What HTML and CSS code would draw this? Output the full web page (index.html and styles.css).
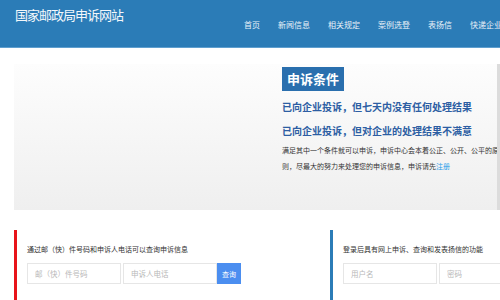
FILE: index.html
```html
<!DOCTYPE html>
<html lang="zh-CN">
<head>
    <meta charset="UTF-8">
    <title>国家邮政局申诉网站</title>
    <link rel="stylesheet" href="styles.css">
</head>
<body>
    <div class="header">
        <div class="logo">国家邮政局申诉网站</div>
        <ul class="nav">
            <li>首页</li>
            <li>新闻信息</li>
            <li>相关规定</li>
            <li>案例选登</li>
            <li>表扬信</li>
            <li>快递企业</li>
        </ul>
    </div>

    <div class="main">
        <div class="banner">
            <div class="cond-title">申诉条件</div>
            <p class="cond">已向企业投诉，但七天内没有任何处理结果</p>
            <p class="cond">已向企业投诉，但对企业的处理结果不满意</p>
            <p class="note">满足其中一个条件就可以申诉，申诉中心会本着公正、公开、公平的原<br>则，尽最大的努力来处理您的申诉信息，申诉请先<a href="#">注册</a></p>
        </div>

        <div class="panels">
            <div class="panel panel-query">
                <p class="panel-tip">通过邮（快）件号码和申诉人电话可以查询申诉信息</p>
                <div class="panel-form">
                    <input type="text" placeholder="邮（快）件号码">
                    <input type="text" placeholder="申诉人电话">
                    <button>查询</button>
                </div>
            </div>
            <div class="panel panel-login">
                <p class="panel-tip">登录后具有网上申诉、查询和发表扬信的功能</p>
                <div class="panel-form">
                    <input type="text" placeholder="用户名">
                    <input type="password" placeholder="密码">
                </div>
            </div>
        </div>
    </div>
</body>
</html>
```

FILE: styles.css
```css
body {
    margin: 0;
    padding: 0;
    background-color: #fff;
    font-family: "Noto Sans CJK SC", "Liberation Sans", sans-serif;
    overflow: hidden;
}

.header {
    display: flex;
    justify-content: space-between;
    height: 47px;
    background-color: #2b7cb7;
    border-bottom: 1px solid #5f9fcf;
}

.logo {
    color: #f4f8fb;
    font-size: 13px;
    letter-spacing: -1px;
    line-height: 16px;
    padding: 7px 0 0 15px;
}

.nav {
    display: flex;
    gap: 18px;
    list-style: none;
    margin: 0;
    padding: 19px 0 0 0;
    margin-right: -2px;
}

.nav li {
    color: #e8f1f8;
    font-size: 8px;
    line-height: 12px;
    white-space: nowrap;
}

.main {
    padding-left: 14px;
}

.banner {
    margin-top: 16px;
    height: 146px;
    padding-left: 268px;
    box-sizing: border-box;
    background: linear-gradient(#fdfdfd, #efefef);
    border-right: 3px solid #dcdcdc;
    overflow: hidden;
}

.cond-title {
    display: inline-block;
    margin-top: 3px;
    padding: 0 5px;
    height: 24px;
    line-height: 24px;
    background-color: #2a6fae;
    color: #fff;
    font-size: 13px;
    font-weight: bold;
}

.cond {
    margin: 0;
    color: #2d5ea3;
    font-size: 10px;
    font-weight: bold;
    line-height: 14px;
}

.cond-title + .cond {
    margin-top: 9px;
}

.cond + .cond {
    margin-top: 10px;
}

.note {
    margin: 4px 0 0 0;
    color: #333;
    font-size: 7px;
    line-height: 16px;
    white-space: nowrap;
}

.note a {
    color: #1e9be8;
    text-decoration: none;
}

.panels {
    display: grid;
    grid-template-columns: 316px 1fr;
    margin-top: 20px;
}

.panel {
    padding: 14px 0 16px 10px;
    border-left: 3px solid #e8141a;
}

.panel-login {
    border-left-color: #2b7cb7;
}

.panel-tip {
    margin: 0;
    color: #333;
    font-size: 7px;
    line-height: 10px;
    white-space: nowrap;
}

.panel-form {
    display: flex;
    gap: 2px;
    margin-top: 9px;
}

input {
    width: 94px;
    height: 21px;
    box-sizing: border-box;
    padding: 0 7px;
    border: 1px solid #e6e6e6;
    font-family: "Noto Sans CJK SC", sans-serif;
    font-size: 7.5px;
    outline: none;
}

input::placeholder {
    color: #b8b8b8;
}

button {
    width: 24px;
    height: 21px;
    margin-left: -2px;
    padding: 0;
    border: none;
    background-color: #4b8ef0;
    color: #fff;
    font-family: "Noto Sans CJK SC", sans-serif;
    font-size: 7px;
}
```
